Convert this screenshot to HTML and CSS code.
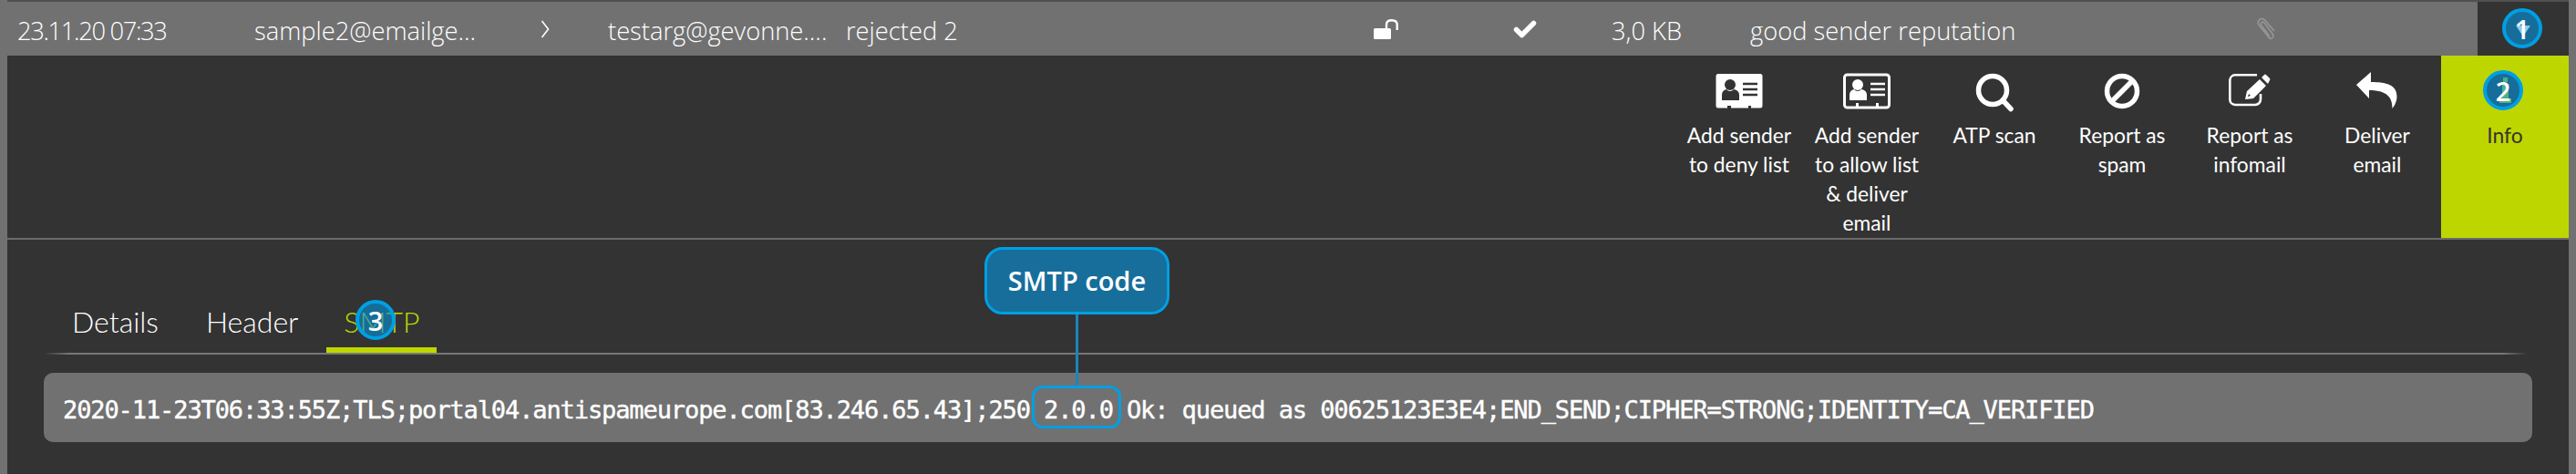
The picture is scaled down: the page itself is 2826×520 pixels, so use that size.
FILE: index.html
```html
<!DOCTYPE html>
<html lang="en">
<head>
<meta charset="utf-8">
<title>SMTP code</title>
<link rel="stylesheet" href="styles.css">
</head>
<body>
<div class="page">
  <div class="row">
    <div class="row-main">
      <span class="cell c-date">23.11.20 07:33</span>
      <span class="cell c-from">sample2@emailge...</span>
      <svg class="chev" viewBox="0 0 10 22"><path d="M1.5 2 L8.5 11 L1.5 20" fill="none" stroke="#fff" stroke-width="1.6"/></svg>
      <span class="cell c-to">testarg@gevonne....</span>
      <span class="cell c-status">rejected 2</span>
      <svg class="lock" viewBox="0 0 27 22"><rect x="0" y="10" width="19" height="12" rx="1.5" fill="#fff"/><path d="M14 11 V6 C14 3 16 1.200 19.800 1.200 C23.500 1.200 25.700 3 25.700 6 V12" fill="none" stroke="#fff" stroke-width="2.400"/></svg>
      <svg class="check" viewBox="0 0 26 20"><path d="M3.500 10.500 L9.500 16.500 L22.500 3.500" fill="none" stroke="#fff" stroke-width="5.500" stroke-linejoin="round" stroke-linecap="round"/></svg>
      <span class="cell c-size">3,0 KB</span>
      <span class="cell c-rep">good sender reputation</span>
      <svg class="clip" viewBox="0 0 22 26"><path d="M15 21 L6 9 C4 6 7 4 9 6 L18 18 C20.500 21.500 17 25 14 22 L3.500 9 C0 4.500 5 -1 9.500 3 L20 15" fill="none" stroke="#949494" stroke-width="1.800"/></svg>
    </div>
    <div class="row-toggle"></div>
    <div class="row-edge"></div>
  </div>

  <div class="panel">
    <div class="actions">
      <div class="action">
        <svg class="icon" viewBox="0 0 52 40"><path d="M3 1 H49 A2.500 2.500 0 0 1 51.500 3.500 V36 A2.500 2.500 0 0 1 49 38.500 H39 V36 H36 V38.500 H17 V36 H13 V38.500 H3 A2.500 2.500 0 0 1 .5 36 V3.500 A2.500 2.500 0 0 1 3 1 Z" fill="#fff"/><circle cx="16" cy="13" r="6" fill="#333"/><path d="M7 30 V24 C7 20.500 9 18.500 12 18 C14 20.500 18 20.500 20 18 C23.500 18.500 26 20.500 26 24 V30 Z" fill="#333"/><path d="M30 12 H46 M30 18 H46 M30 24 H46" stroke="#333" stroke-width="2.600"/></svg>
        <span class="label">Add sender<br>to deny list</span>
      </div>
      <div class="action">
        <svg class="icon" viewBox="0 0 52 40"><rect x="1.500" y="2" width="49" height="36" rx="3" fill="none" stroke="#fff" stroke-width="3"/><path d="M14 38 V33 H17 V38 Z M36 38 V33 H39 V38 Z" fill="#fff"/><circle cx="16" cy="13" r="6" fill="#fff"/><path d="M7 30 V24 C7 20.500 9 18.500 12 18 C14 20.500 18 20.500 20 18 C23.500 18.500 26 20.500 26 24 V30 Z" fill="#fff"/><path d="M30 12 H46 M30 18 H46 M30 24 H46" stroke="#fff" stroke-width="2.600"/></svg>
        <span class="label">Add sender<br>to allow list<br>&amp; deliver<br>email</span>
      </div>
      <div class="action">
        <svg class="icon" viewBox="0 0 52 40"><circle cx="24" cy="19" r="15.500" fill="none" stroke="#fff" stroke-width="5.500"/><path d="M36 31 L44 39.500" stroke="#fff" stroke-width="5.500" stroke-linecap="round"/></svg>
        <span class="label">ATP scan</span>
      </div>
      <div class="action">
        <svg class="icon" viewBox="0 0 52 40"><circle cx="26" cy="20" r="16.500" fill="none" stroke="#fff" stroke-width="5.500"/><path d="M14.500 31.500 L37.500 8.500" stroke="#fff" stroke-width="5.500"/></svg>
        <span class="label">Report as<br>spam</span>
      </div>
      <div class="action">
        <svg class="icon" viewBox="0 0 52 40"><path d="M34 2.300 H10 A6 6 0 0 0 4.300 8 V29 A6 6 0 0 0 10 35 H32 A6 6 0 0 0 38 29 V23" fill="none" stroke="#fff" stroke-width="2.600"/><path d="M21 29 L23 20 L37 7 L44 14 L30 28 Z M39 5 L42 2 Q43 1 44 2 L48 6 Q49 7 48 8 L46 12 Z" fill="#fff"/><path d="M24 26 L25 23 L27 25 Z" fill="#333"/></svg>
        <span class="label">Report as<br>infomail</span>
      </div>
      <div class="action">
        <svg class="icon" viewBox="0 0 52 40"><path d="M19 -1 V10 C36 10 47.500 13 47.500 26 C47.500 31 45 36 42.500 39 C42.500 28 38 19 17 19 V28 L3 13 Z" fill="#fff"/></svg>
        <span class="label">Deliver<br>email</span>
      </div>
      <div class="action action-active">
        <svg class="icon" viewBox="0 0 52 40"><circle cx="24" cy="19" r="20" fill="#333"/><path d="M24 5 H29 V10 H24 Z M23 12 H30 V28 H33 V33 H20 V28 H23 Z" fill="#bed600"/></svg>
        <span class="label">Info</span>
      </div>
    </div>

    <div class="tabs">
      <span class="tab">Details</span>
      <span class="tab">Header</span>
      <span class="tab tab-active">SMTP</span>
    </div>

    <div class="code">2020-11-23T06:33:55Z;TLS;portal04.antispameurope.com[83.246.65.43];250 2.0.0 Ok: queued as 00625123E3E4;END_SEND;CIPHER=STRONG;IDENTITY=CA_VERIFIED</div>
  </div>

  <div class="badge b1">
    <svg class="b1-tri" viewBox="0 0 16 12"><path d="M0 0 H16 L8 12 Z" fill="#8ccbea"/></svg>
    <span class="num">1</span>
  </div>
  <div class="badge b2"><span class="num">2</span></div>
  <div class="badge b3"><span class="num">3</span></div>
  <div class="tip">SMTP code</div>
  <div class="tip-line"></div>
  <div class="mark"></div>
</div>
</body>
</html>
```

FILE: styles.css
```css
* { box-sizing: border-box; }
html, body { margin: 0; padding: 0; background: #333; }
.page {
  position: relative;
  width: 2826px;
  height: 520px;
  overflow: hidden;
  background: #333;
  border-left: 8px solid #717171;
  border-right: 8px solid #717171;
  font-family: "Lato", "Liberation Sans", sans-serif;
  color: #fff;
}
.row {
  display: flex;
  height: 61px;
  margin: 0 -8px;
  border-top: 2px solid #505050;
}
.row-main {
  flex: 0 0 2718px;
  display: flex;
  align-items: center;
  background: #717171;
  font-family: "Open Sans", sans-serif;
  font-size: 27.3px;
  font-weight: 300;
}
.cell { white-space: nowrap; padding-top: 3px; }
.c-date { margin-left: 19px; width: 260px; letter-spacing: -1.35px; }
.c-from { width: 314px; }
.chev { width: 10px; height: 22px; margin-right: 64px; }
.c-to { width: 261px; }
.c-status { width: 579px; }
.lock { width: 27px; height: 22px; margin-right: 126px; }
.check { width: 26px; height: 20px; margin-right: 82px; }
.c-size { width: 152px; }
.c-rep { width: 555px; }
.clip { width: 22px; height: 26px; }
.row-toggle { flex: 0 0 100px; background: #333; }
.row-edge { flex: 1; background: #717171; }

.panel { height: 459px; }
.actions {
  display: flex;
  justify-content: flex-end;
  height: 202px;
  border-bottom: 2px solid #6b6b6b;
}
.action {
  width: 140px;
  display: flex;
  flex-direction: column;
  align-items: center;
  padding-top: 19px;
  font-size: 22.8px;
  line-height: 32px;
  text-align: center;
}
.action-active { background: #bed600; color: #333; }
.icon { width: 52px; height: 40px; display: block; margin-bottom: 12px; overflow: visible; }
.label { display: block; }

.tabs {
  display: flex;
  gap: 10px;
  height: 126px;
  padding: 0 0 2px 50px;
  align-items: flex-end;
  background: linear-gradient(90deg, transparent 40px, #777 68px, #777 2738px, transparent 2765px) left bottom / 100% 2px no-repeat;
}
.tab {
  font-size: 32px;
  font-weight: 300;
  padding: 0 21px 9px;
  line-height: 38px;
  border-bottom: 6px solid transparent;
}
.tab-active { color: #bed600; border-bottom-color: #bed600; width: 121px; text-align: center; padding: 0 0 9px; }

.code {
  margin: 20px 0 0 40px;
  width: 2730px;
  height: 76px;
  background: #717171;
  border-radius: 10px;
  padding-left: 21px;
  font-family: "DejaVu Sans Mono", "Liberation Mono", monospace;
  font-size: 27px;
  letter-spacing: -1.1px;
  line-height: 81px;
  white-space: nowrap;
  -webkit-text-stroke: 0.4px #fff;
}
.badge {
  position: absolute;
  width: 44px;
  height: 44px;
  border-radius: 50%;
  border: 4px solid #009fe3;
  background: rgba(4, 149, 224, 0.6);
  display: flex;
  align-items: center;
  justify-content: center;
  font-family: "Open Sans", sans-serif;
  font-weight: 600;
  font-size: 29px;
  color: #fff;
}
.num { position: relative; line-height: 1; }
.b1 { left: 2737px; top: 9px; }
.b1-tri { position: absolute; left: 11px; top: 15px; width: 16px; height: 12px; }
.b2 { left: 2716px; top: 77px; }
.b3 { left: 382px; top: 329px; }
.tip {
  position: absolute;
  left: 1072px;
  top: 271px;
  width: 203px;
  height: 74px;
  border: 3px solid #009fe3;
  border-radius: 20px;
  background: #176e9b;
  font-family: "Open Sans", sans-serif;
  font-weight: 600;
  font-size: 29px;
  line-height: 68px;
  text-align: center;
}
.tip-line {
  position: absolute;
  left: 1172px;
  top: 345px;
  width: 3px;
  height: 79px;
  background: #1b86bb;
}
.mark {
  position: absolute;
  left: 1124px;
  top: 423px;
  width: 98px;
  height: 47px;
  border: 3px solid #009fe3;
  border-radius: 12px;
}
```
